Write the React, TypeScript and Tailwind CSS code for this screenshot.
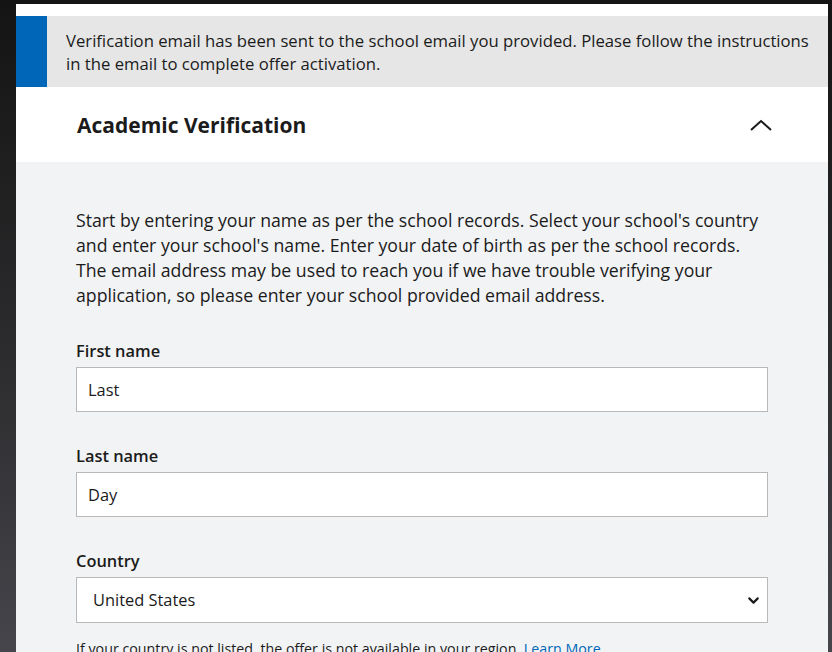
import { ChevronDown } from "lucide-react";

export default function App() {
    return (
        <div className="h-[652px] w-[832px] overflow-hidden bg-gradient-to-b from-[#141414] via-[#2a2a2c] to-[#45454b] pt-1 pl-4 pr-1 font-['Open_Sans',sans-serif] text-[#1b1b1b]">
            <div className="h-full bg-white pt-3">
                {/* Notice */}
                <div className="flex bg-[#e6e6e6]">
                    <div className="w-[31px] shrink-0 bg-[#0067b8]" />
                    <p className="pt-[13px] pb-[12px] pl-[19px] pr-3 text-[16.7px] leading-[23px]">
                        Verification email has been sent to the school email you provided. Please follow the instructions in the email to complete offer activation.
                    </p>
                </div>

                {/* Header */}
                <div className="flex h-[75px] items-center justify-between pl-[61px] pr-[55px]">
                    <h2 className="pt-[3px] text-[21px] font-bold">Academic Verification</h2>
                    <svg width="24" height="14" viewBox="0 0 24 14" fill="none" stroke="#1b1b1b" strokeWidth="2">
                        <path d="M2 12 L12 3 L22 12" />
                    </svg>
                </div>

                {/* Form */}
                <div className="h-full bg-[#f2f3f5] px-[60px] pt-[46px]">
                    <p className="text-[17.7px] leading-[25px]">
                        Start by entering your name as per the school records. Select your school's country and enter your school's name. Enter your date of birth as per the school records. The email address may be used to reach you if we have trouble verifying your application, so please enter your school provided email address.
                    </p>

                    <div className="mt-[31px]">
                        <label className="block text-[16.4px] font-semibold leading-[24px]">First name</label>
                        <input readOnly value="Last" className="mt-[4px] h-[45px] w-full border border-[#b8b8b8] bg-white px-[11px] text-[16.4px] outline-none" />
                    </div>

                    <div className="mt-[32px]">
                        <label className="block text-[16.4px] font-semibold leading-[24px]">Last name</label>
                        <input readOnly value="Day" className="mt-[4px] h-[45px] w-full border border-[#b8b8b8] bg-white px-[11px] text-[16.4px] outline-none" />
                    </div>

                    <div className="mt-[32px]">
                        <label className="block text-[16.4px] font-semibold leading-[24px]">Country</label>
                        <div className="relative mt-[4px] flex h-[46px] w-full items-center border border-[#b8b8b8] bg-white pl-[16px] text-[16.4px]">
                            United States
                            <ChevronDown className="absolute right-[5px] top-[14px]" size={17} strokeWidth={3} />
                        </div>
                        <p className="mt-[16px] text-[14.25px] leading-[20px]">
                            If your country is not listed, the offer is not available in your region. <span className="text-[#0067b8]">Learn More</span>
                        </p>
                    </div>
                </div>
            </div>
        </div>
    );
}
